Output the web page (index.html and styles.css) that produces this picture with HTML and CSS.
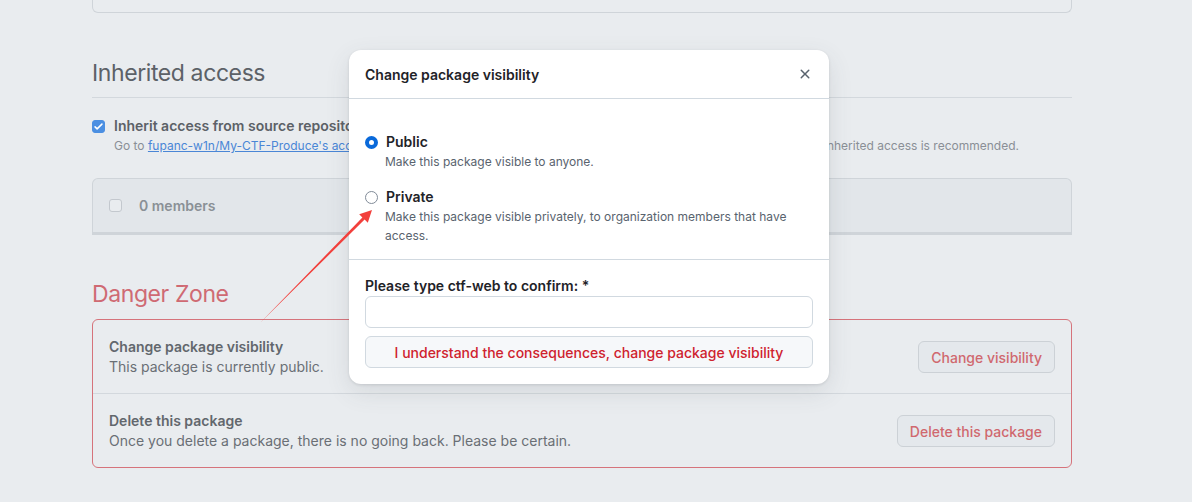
FILE: index.html
```html
<!DOCTYPE html>
<html>
<head>
    <title>Package settings</title>
    <link rel="stylesheet" href="styles.css">
</head>
<body>

<!-- Settings page (under the dialog backdrop) -->
<div class="main">
    <div class="box-tail"></div>

    <h2 class="subhead">Inherited access</h2>
    <label class="check-row">
        <span class="checkbox checked">
            <svg viewBox="0 0 16 16" width="11" height="11"><path d="M3 8.5l3 3 7-7" stroke="#fff" stroke-width="2.2" fill="none" stroke-linecap="round" stroke-linejoin="round"/></svg>
        </span>
        <span class="check-label">Inherit access from source repository (recommended)</span>
    </label>
    <p class="note">Go to <a href="#">fupanc-w1n/My-CTF-Produce's access settings</a> to change access. Package access will be managed by the repository, inherited access is recommended.</p>

    <div class="members">
        <span class="checkbox"></span>
        <strong>0 members</strong>
    </div>

    <h2 class="subhead danger">Danger Zone</h2>
    <div class="danger-box">
        <div class="danger-row">
            <div>
                <strong>Change package visibility</strong>
                <p>This package is currently public.</p>
            </div>
            <button class="btn-danger">Change visibility</button>
        </div>
        <div class="danger-row">
            <div>
                <strong>Delete this package</strong>
                <p>Once you delete a package, there is no going back. Please be certain.</p>
            </div>
            <button class="btn-danger">Delete this package</button>
        </div>
    </div>
</div>

<!-- Dialog -->
<div class="dialog">
    <div class="dialog-header">
        <h3>Change package visibility</h3>
        <svg class="close" viewBox="0 0 16 16" width="16" height="16"><path d="M3.72 3.72a.75.75 0 0 1 1.06 0L8 6.94l3.22-3.22a.75.75 0 1 1 1.060 1.06L9.06 8l3.22 3.22a.75.75 0 1 1-1.06 1.06L8 9.06l-3.22 3.22a.75.75 0 0 1-1.06-1.06L6.94 8 3.72 4.78a.75.75 0 0 1 0-1.06Z" fill="#59636e"/></svg>
    </div>
    <div class="dialog-body">
        <label class="radio-row">
            <input type="radio" name="visibility" checked>
            <span class="radio-label">Public</span>
        </label>
        <p class="radio-note">Make this package visible to anyone.</p>
        <label class="radio-row">
            <input type="radio" name="visibility">
            <span class="radio-label">Private</span>
        </label>
        <p class="radio-note">Make this package visible privately, to organization members that have access.</p>
    </div>
    <div class="dialog-footer">
        <label class="confirm-label">Please type ctf-web to confirm: *</label>
        <input class="confirm-input" type="text">
        <button class="btn-confirm">I understand the consequences, change package visibility</button>
    </div>
</div>

<!-- red pointer -->
<svg class="pointer" width="1192" height="502" viewBox="0 0 1192 502">
    <polygon points="260,323 364.6,219.6 367.8,222.7 372,210 359.2,214.3 362.4,217.4" fill="#f2403c"/>
</svg>

</body>
</html>
```

FILE: styles.css
```css
body {
    font-family: Inter, "Liberation Sans", Arial, sans-serif;
    margin: 0;
    background-color: #e9ecef;
    color: #5c6167;
    font-size: 14px;
}

/* Page */
.main {
    width: 980px;
    margin-left: 92px;
}
.box-tail {
    height: 12px;
    border: 1px solid #cfd4d9;
    border-top: 0;
    border-radius: 0 0 6px 6px;
}
.subhead {
    margin: 45px 0 0 0;
    padding-bottom: 9px;
    font-size: 23px;
    letter-spacing: -0.4px;
    line-height: 30px;
    font-weight: 400;
    color: #5c6167;
    border-bottom: 1px solid #d3d8dd;
}
.subhead.danger {
    margin-top: 44px;
    color: #cf6a73;
    border-bottom: 0;
    padding-bottom: 0;
}
.check-row {
    display: flex;
    align-items: center;
    margin-top: 18px;
    line-height: 20px;
}
.checkbox {
    display: inline-flex;
    align-items: center;
    justify-content: center;
    width: 13px;
    height: 13px;
    box-sizing: border-box;
    border: 1px solid #c3c8ce;
    border-radius: 3px;
    background: #e9ecef;
    flex-shrink: 0;
}
.checkbox.checked {
    background: #4b8fe2;
    border-color: #4b8fe2;
}
.check-label {
    margin-left: 9px;
    font-weight: 600;
    color: #5c6167;
}
.note {
    margin: 1px 0 0 22px;
    font-size: 12px;
    line-height: 18px;
    color: #8a8f96;
}
.note a {
    color: #4a86d6;
}
.members {
    display: flex;
    align-items: center;
    gap: 17px;
    margin-top: 23px;
    height: 53px;
    padding-left: 16px;
    background: #e2e6ea;
    border: 1px solid #cfd4d9;
    border-bottom: 3px solid #cfd4d9;
    border-radius: 6px 6px 0 0;
    color: #8a9096;
}
.members strong {
    font-weight: 600;
}
.members .checkbox {
    background: #e9ecef;
}
.danger-box {
    margin-top: 10px;
    border: 1px solid #d6737b;
    border-radius: 6px;
}
.danger-row {
    display: flex;
    justify-content: space-between;
    align-items: center;
    padding: 17px 16px 16px 16px;
    line-height: 20px;
}
.danger-row + .danger-row {
    border-top: 1px solid #d3d8dd;
}
.danger-row strong {
    font-weight: 600;
    color: #62676d;
}
.danger-row p {
    margin: 0;
    color: #6a6f75;
}
.btn-danger {
    height: 32px;
    padding: 0 12px;
    font-family: inherit;
    font-size: 14px;
    font-weight: 500;
    color: #d0686f;
    background: #e4e8ec;
    border: 1px solid #ccd1d6;
    border-radius: 6px;
}

/* Dialog */
.dialog {
    position: absolute;
    left: 349px;
    top: 50px;
    width: 480px;
    background: #ffffff;
    border-radius: 12px;
    box-shadow: 0 8px 24px rgba(66, 74, 83, 0.12), 0 1px 3px rgba(31, 35, 40, 0.12);
    color: #1f2328;
}
.dialog-header {
    display: flex;
    justify-content: space-between;
    align-items: center;
    height: 48px;
    padding: 0 16px;
    border-bottom: 1px solid #d1d9e0;
}
.dialog-header h3 {
    margin: 0;
    font-size: 14px;
    font-weight: 600;
}
.dialog-body {
    padding: 33px 16px 14px 16px;
    border-bottom: 1px solid #d1d9e0;
}
.radio-row {
    display: flex;
    align-items: center;
    gap: 8px;
    line-height: 20px;
}
.radio-row input {
    appearance: none;
    margin: 0;
    width: 13px;
    height: 13px;
    border: 1px solid #818b98;
    border-radius: 50%;
    background: #ffffff;
}
.radio-row input:checked {
    border: 4px solid #0969da;
}
.radio-label {
    font-weight: 600;
}
.radio-note {
    margin: 0 0 16px 20px;
    font-size: 12px;
    line-height: 19px;
    color: #59636e;
}
.radio-note:last-child {
    margin-bottom: 0;
}
.dialog-footer {
    padding: 16px;
}
.confirm-label {
    display: block;
    font-weight: 600;
    line-height: 20px;
}
.confirm-input {
    display: block;
    width: 100%;
    height: 32px;
    box-sizing: border-box;
    border: 1px solid #d1d9e0;
    border-radius: 6px;
}
.btn-confirm {
    display: block;
    width: 100%;
    height: 32px;
    margin-top: 8px;
    font-family: inherit;
    font-size: 14px;
    font-weight: 500;
    color: #cf222e;
    background: #f6f8fa;
    border: 1px solid #d1d9e0;
    border-radius: 6px;
}

.pointer {
    position: absolute;
    left: 0;
    top: 0;
    pointer-events: none;
}
```
